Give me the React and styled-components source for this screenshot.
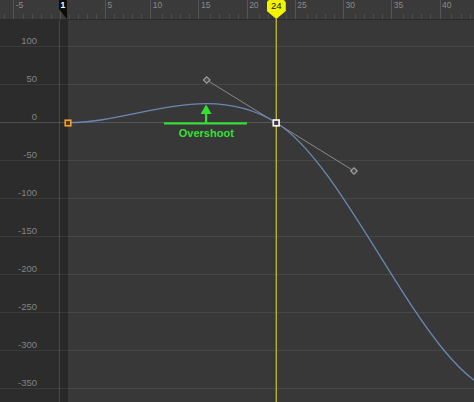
import styled, { createGlobalStyle } from "styled-components"

const GlobalStyle = createGlobalStyle`
  html, body {
    margin: 0;
    padding: 0;
    background: #383838;
    overflow: hidden;
  }
`

// graph mapping, in page pixels
const FRAME_W = 9.07
const FIRST_FRAME = -7
const LAST_FRAME = 52
const FRAME_ONE_X = 67.7
const CURRENT_X = 276.3

const frames = Array.from({ length: LAST_FRAME - FIRST_FRAME + 1 }, (_, i) => FIRST_FRAME + i)
// the last row has no label, it sits below the window
const values = [100, 50, 0, -50, -100, -150, -200, -250, -300, -350, null]

const EditorStyled = styled.div`
  position: relative;
  width: 474px;
  height: 402px;
  overflow: hidden;
  background: #383838;
  font-family: "Liberation Sans", Arial, sans-serif;
`

const RulerStyled = styled.div`
  height: 19px;
  background: #3a3a3a;
  border-bottom: 1px solid #2a2a2a;
  overflow: hidden;
`

const RulerTrackStyled = styled.div`
  display: flex;
  height: 100%;
  margin-left: ${FRAME_ONE_X - (1 - FIRST_FRAME) * FRAME_W}px;
`

const FrameCellStyled = styled.div`
  flex: 0 0 ${FRAME_W}px;
  height: 100%;
  background: ${({ $major }) => $major
    ? "linear-gradient(#555, #555) left top / 1px 100% no-repeat"
    : "linear-gradient(#4c4c4c, #4c4c4c) left bottom / 1px 5px no-repeat"};
  & > span {
    display: block;
    padding-left: 2.5px;
    font-size: 8.5px;
    line-height: 10px;
    color: #8a8a8a;
    white-space: nowrap;
  }
`

const BodyStyled = styled.div`
  display: flex;
  flex-direction: column;
`

const RowStyled = styled.div`
  display: flex;
  flex: 0 0 ${({ $height }) => $height}px;
  & > div {
    box-sizing: border-box;
    border-bottom: 1px solid ${({ $zero }) => $zero ? "rgba(255,255,255,0.16)" : "rgba(255,255,255,0.07)"};
  }
`

const LabelCellStyled = styled.div`
  width: 59px;
  background: #2c2c2c;
  display: flex;
  align-items: flex-end;
  justify-content: flex-end;
  padding-right: 22px;
  font-size: 9.5px;
  line-height: 10px;
  color: #838383;
`

const DividerStyled = styled.div`
  width: 1px;
  background: #474747;
`

const StripStyled = styled.div`
  width: 7.5px;
  background: #282828;
`

const PlotCellStyled = styled.div`
  flex: 1;
  background: #383838;
`

const FrameFlagStyled = styled.div`
  position: absolute;
  left: 58.5px;
  top: 0;
  width: 8.5px;
  height: 19px;
  background: #0c0c0c;
  clip-path: polygon(0 0, 100% 0, 100% 100%, 0 45%);
  color: #fff;
  font-size: 8.5px;
  font-weight: bold;
  line-height: 10px;
  padding-left: 2px;
  box-sizing: border-box;
`

const CurrentFrameStyled = styled.div`
  position: absolute;
  left: ${CURRENT_X - 9.5}px;
  top: 0;
  width: 19px;
  height: 19px;
  background: #f4f400;
  clip-path: polygon(10% 0, 90% 0, 100% 12%, 100% 58%, 50% 100%, 0 58%, 0 12%);
  color: #111;
  font-size: 9.5px;
  line-height: 11px;
  text-align: center;
`

const OverlayStyled = styled.svg`
  position: absolute;
  left: 0;
  top: 0;
  pointer-events: none;
`

const Handle = ({ x, y }) => (
  <rect
    x={x - 2.3} y={y - 2.3} width="4.6" height="4.6"
    transform={`rotate(45 ${x} ${y})`}
    fill="#4a4a4a" stroke="#a5a5a5" strokeWidth="1.1"
  />
)

const GraphOverlay = () => {
  const green = "#34e034"
  return (
    <OverlayStyled width="474" height="402" viewBox="0 0 474 402">
      {/* current time */}
      <line x1={CURRENT_X} y1="18" x2={CURRENT_X} y2="402" stroke="#b4b22c" strokeWidth="1.4" />

      {/* tangent */}
      <line x1="206.7" y1="80" x2="354" y2="171" stroke="#8a8a8a" strokeWidth="1" />

      {/* animation curve */}
      <path
        d="M67.7,122.7 C137,122.7 206.7,80 276.3,122.7 C354,171 432,394.8 510,394.8"
        fill="none" stroke="#6c87b4" strokeWidth="1.3"
      />

      <Handle x={206.7} y={80} />
      <Handle x={354} y={171} />

      {/* keys */}
      <rect x="65.2" y="120.2" width="5.6" height="5.6" fill="#5a3a0c" stroke="#f0a030" strokeWidth="1.6" />
      <rect x="273.3" y="120" width="5.8" height="5.8" fill="#3a3a3a" stroke="#f4f4f4" strokeWidth="1.7" />

      {/* overshoot annotation */}
      <rect x="164" y="122.3" width="83" height="2.2" fill={green} />
      <rect x="205" y="113" width="2.2" height="10" fill={green} />
      <polygon points="206.1,104.5 211.6,114 200.6,114" fill={green} />
      <text
        x="206.3" y="137.2" textAnchor="middle"
        fontFamily='"Liberation Sans", Arial, sans-serif'
        fontSize="11" fontWeight="bold" fill={green}
      >
        Overshoot
      </text>
    </OverlayStyled>
  )
}

const App = () => {
  return (
    <>
      <GlobalStyle />
      <EditorStyled>
        <RulerStyled>
          <RulerTrackStyled>
            {frames.map(frame => (
              <FrameCellStyled key={frame} $major={frame % 5 === 0}>
                {frame % 5 === 0 && frame !== 0 ? <span>{frame}</span> : null}
              </FrameCellStyled>
            ))}
          </RulerTrackStyled>
        </RulerStyled>

        <BodyStyled>
          {values.map((value, i) => (
            <RowStyled key={i} $height={i === 0 ? 27 : 38} $zero={value === 0}>
              <LabelCellStyled>{value}</LabelCellStyled>
              <DividerStyled />
              <StripStyled />
              <PlotCellStyled />
            </RowStyled>
          ))}
        </BodyStyled>

        <FrameFlagStyled>1</FrameFlagStyled>
        <CurrentFrameStyled>24</CurrentFrameStyled>

        <GraphOverlay />
      </EditorStyled>
    </>
  )
}

export default App
